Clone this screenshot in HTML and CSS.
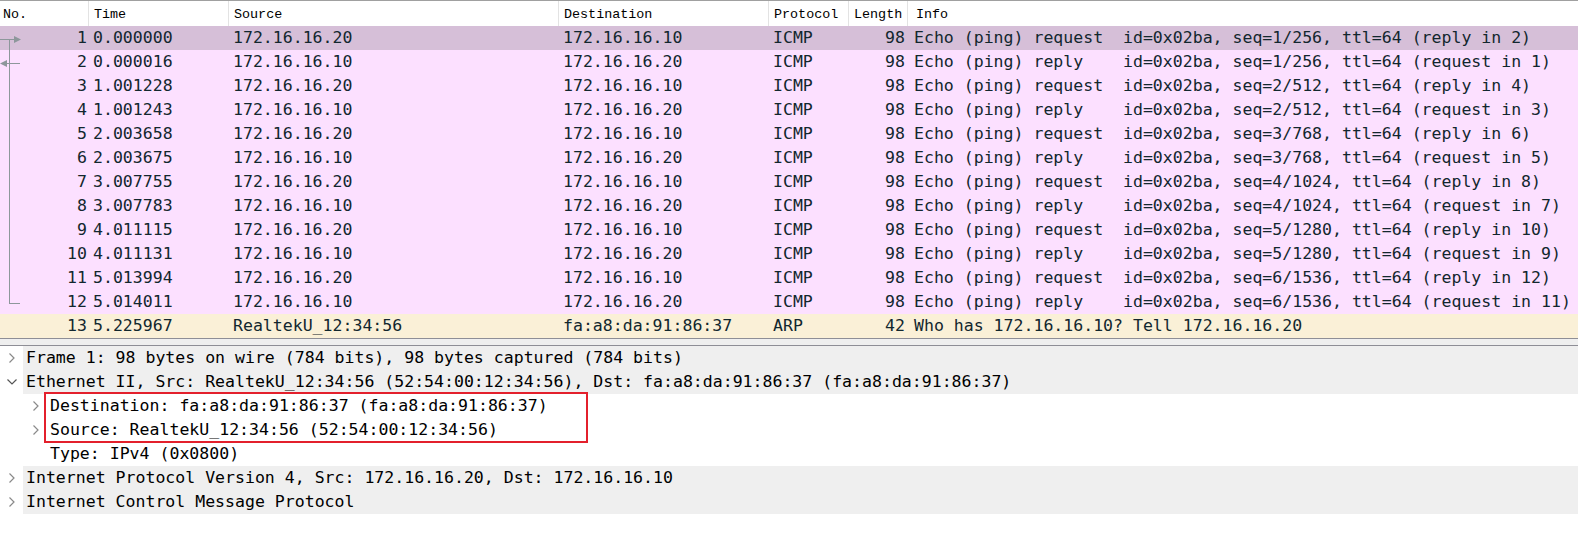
FILE: index.html
```html
<!DOCTYPE html>
<html>
<head>
<meta charset="utf-8">
<link rel="stylesheet" href="styles.css">
</head>
<body>
<div class="list">
  <div class="hdr">
    <div class="h">No.</div>
    <div class="h">Time</div>
    <div class="h">Source</div>
    <div class="h">Destination</div>
    <div class="h">Protocol</div>
    <div class="h">Length</div>
    <div class="h last">Info</div>
  </div>
  <div class="row icmp sel"><span class="no">1</span><span class="t">0.000000</span><span class="c">172.16.16.20</span><span class="c">172.16.16.10</span><span class="c">ICMP</span><span class="len">98</span><span class="info">Echo (ping) request  id=0x02ba, seq=1/256, ttl=64 (reply in 2)</span></div>
  <div class="row icmp"><span class="no">2</span><span class="t">0.000016</span><span class="c">172.16.16.10</span><span class="c">172.16.16.20</span><span class="c">ICMP</span><span class="len">98</span><span class="info">Echo (ping) reply    id=0x02ba, seq=1/256, ttl=64 (request in 1)</span></div>
  <div class="row icmp"><span class="no">3</span><span class="t">1.001228</span><span class="c">172.16.16.20</span><span class="c">172.16.16.10</span><span class="c">ICMP</span><span class="len">98</span><span class="info">Echo (ping) request  id=0x02ba, seq=2/512, ttl=64 (reply in 4)</span></div>
  <div class="row icmp"><span class="no">4</span><span class="t">1.001243</span><span class="c">172.16.16.10</span><span class="c">172.16.16.20</span><span class="c">ICMP</span><span class="len">98</span><span class="info">Echo (ping) reply    id=0x02ba, seq=2/512, ttl=64 (request in 3)</span></div>
  <div class="row icmp"><span class="no">5</span><span class="t">2.003658</span><span class="c">172.16.16.20</span><span class="c">172.16.16.10</span><span class="c">ICMP</span><span class="len">98</span><span class="info">Echo (ping) request  id=0x02ba, seq=3/768, ttl=64 (reply in 6)</span></div>
  <div class="row icmp"><span class="no">6</span><span class="t">2.003675</span><span class="c">172.16.16.10</span><span class="c">172.16.16.20</span><span class="c">ICMP</span><span class="len">98</span><span class="info">Echo (ping) reply    id=0x02ba, seq=3/768, ttl=64 (request in 5)</span></div>
  <div class="row icmp"><span class="no">7</span><span class="t">3.007755</span><span class="c">172.16.16.20</span><span class="c">172.16.16.10</span><span class="c">ICMP</span><span class="len">98</span><span class="info">Echo (ping) request  id=0x02ba, seq=4/1024, ttl=64 (reply in 8)</span></div>
  <div class="row icmp"><span class="no">8</span><span class="t">3.007783</span><span class="c">172.16.16.10</span><span class="c">172.16.16.20</span><span class="c">ICMP</span><span class="len">98</span><span class="info">Echo (ping) reply    id=0x02ba, seq=4/1024, ttl=64 (request in 7)</span></div>
  <div class="row icmp"><span class="no">9</span><span class="t">4.011115</span><span class="c">172.16.16.20</span><span class="c">172.16.16.10</span><span class="c">ICMP</span><span class="len">98</span><span class="info">Echo (ping) request  id=0x02ba, seq=5/1280, ttl=64 (reply in 10)</span></div>
  <div class="row icmp"><span class="no">10</span><span class="t">4.011131</span><span class="c">172.16.16.10</span><span class="c">172.16.16.20</span><span class="c">ICMP</span><span class="len">98</span><span class="info">Echo (ping) reply    id=0x02ba, seq=5/1280, ttl=64 (request in 9)</span></div>
  <div class="row icmp"><span class="no">11</span><span class="t">5.013994</span><span class="c">172.16.16.20</span><span class="c">172.16.16.10</span><span class="c">ICMP</span><span class="len">98</span><span class="info">Echo (ping) request  id=0x02ba, seq=6/1536, ttl=64 (reply in 12)</span></div>
  <div class="row icmp"><span class="no">12</span><span class="t">5.014011</span><span class="c">172.16.16.10</span><span class="c">172.16.16.20</span><span class="c">ICMP</span><span class="len">98</span><span class="info">Echo (ping) reply    id=0x02ba, seq=6/1536, ttl=64 (request in 11)</span></div>
  <div class="row arp"><span class="no">13</span><span class="t">5.225967</span><span class="c">RealtekU_12:34:56</span><span class="c">fa:a8:da:91:86:37</span><span class="c">ARP</span><span class="len">42</span><span class="info">Who has 172.16.16.10? Tell 172.16.16.20</span></div>
  <svg class="conv" width="24" height="290" viewBox="0 0 24 290">
    <g stroke="#8d979b" stroke-width="1" fill="none">
      <line x1="9.5" y1="12" x2="9.5" y2="276.5"/>
      <line x1="0" y1="12.5" x2="15" y2="12.5"/>
      <line x1="6" y1="36.5" x2="20" y2="36.5"/>
      <line x1="9" y1="276.5" x2="20" y2="276.5"/>
    </g>
    <g fill="#8d979b">
      <polygon points="14,9 21,12.5 14,16"/>
      <polygon points="0,36.5 7,33 7,40"/>
    </g>
  </svg>
</div>
<div class="split"></div>
<div class="tree">
  <div class="node top"><span class="tw"><svg width="6" height="10" viewBox="0 0 6 10"><polyline points="0.5,0.5 5,5 0.5,9.5" fill="none" stroke="#8a8a8a" stroke-width="1.2"/></svg></span><span class="lbl">Frame 1: 98 bytes on wire (784 bits), 98 bytes captured (784 bits)</span></div>
  <div class="node top"><span class="tw"><svg width="10" height="6" viewBox="0 0 10 6"><polyline points="0.5,0.5 5,5 9.5,0.5" fill="none" stroke="#555" stroke-width="1.2"/></svg></span><span class="lbl">Ethernet II, Src: RealtekU_12:34:56 (52:54:00:12:34:56), Dst: fa:a8:da:91:86:37 (fa:a8:da:91:86:37)</span></div>
  <div class="node child"><span class="tw"><svg width="6" height="10" viewBox="0 0 6 10"><polyline points="0.5,0.5 5,5 0.5,9.5" fill="none" stroke="#8a8a8a" stroke-width="1.2"/></svg></span><span class="lbl">Destination: fa:a8:da:91:86:37 (fa:a8:da:91:86:37)</span></div>
  <div class="node child"><span class="tw"><svg width="6" height="10" viewBox="0 0 6 10"><polyline points="0.5,0.5 5,5 0.5,9.5" fill="none" stroke="#8a8a8a" stroke-width="1.2"/></svg></span><span class="lbl">Source: RealtekU_12:34:56 (52:54:00:12:34:56)</span></div>
  <div class="node child"><span class="tw"></span><span class="lbl">Type: IPv4 (0x0800)</span></div>
  <div class="node top"><span class="tw"><svg width="6" height="10" viewBox="0 0 6 10"><polyline points="0.5,0.5 5,5 0.5,9.5" fill="none" stroke="#8a8a8a" stroke-width="1.2"/></svg></span><span class="lbl">Internet Protocol Version 4, Src: 172.16.16.20, Dst: 172.16.16.10</span></div>
  <div class="node top"><span class="tw"><svg width="6" height="10" viewBox="0 0 6 10"><polyline points="0.5,0.5 5,5 0.5,9.5" fill="none" stroke="#8a8a8a" stroke-width="1.2"/></svg></span><span class="lbl">Internet Control Message Protocol</span></div>
  <div class="mark"></div>
</div>
</body>
</html>
```

FILE: styles.css
```css
html, body {
  margin: 0;
  padding: 0;
  background: #ffffff;
}
body {
  width: 1578px;
  height: 553px;
  overflow: hidden;
  font-family: "DejaVu Sans Mono", "Liberation Mono", monospace;
  font-size: 16.55px;
  color: #12272e;
}
.list {
  position: relative;
  border-top: 1px solid #a0a0a0;
}
.hdr, .row {
  display: grid;
  grid-template-columns: 89px 140px 330px 210px 80px 59px 1fr;
}
.hdr {
  height: 25px;
  background: #ffffff;
  font-family: "Liberation Mono", monospace;
  font-size: 13.4px;
  color: #000;
}
.h {
  display: flex;
  align-items: center;
  padding-left: 5px;
  border-right: 1px solid #e3e3e3;
  padding-top: 2px;
}
.h:first-child { padding-left: 3px; }
.h.last { border-right: none; padding-left: 8px; }
.row {
  height: 24px;
  align-items: center;
  white-space: pre;
  line-height: 24px;
}
.row.icmp { background: #fce0ff; }
.row.sel { background: #d6bfd8; }
.row.arp { background: #faf0d7; }
.no { text-align: right; padding-right: 2px; }
.t { padding-left: 4px; }
.c { padding-left: 4px; }
.len { text-align: right; padding-right: 3px; }
.info { padding-left: 6px; overflow: hidden; }
.conv {
  position: absolute;
  left: 0;
  top: 26px;
}
.split {
  height: 6px;
  background: #efefef;
  border-top: 1px solid #8e8e96;
  border-bottom: 1px solid #8e8e96;
}
.tree {
  position: relative;
  color: #000;
}
.node {
  display: flex;
  height: 24px;
  align-items: center;
  white-space: pre;
}
.node.child { padding-left: 24px; }
.tw {
  width: 23px;
  flex: none;
  display: flex;
  align-items: center;
  justify-content: center;
  height: 24px;
}
.lbl {
  flex: 1;
  height: 24px;
  line-height: 24px;
  padding-left: 3px;
}
.node.top .lbl { background: #efefef; }
.mark {
  position: absolute;
  left: 44px;
  top: 46px;
  width: 540px;
  height: 47px;
  border: 2px solid #e3202c;
}
```
